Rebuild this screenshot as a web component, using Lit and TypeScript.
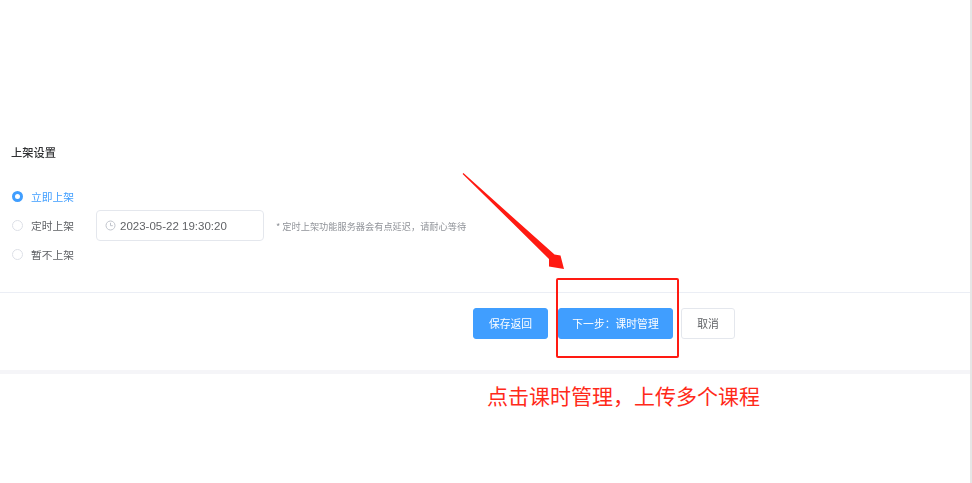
import { LitElement, html, css } from 'lit';
import { customElement } from 'lit/decorators.js';

@customElement('app-root')
export class AppRoot extends LitElement {
  static styles = css`
    :host {
      display: block;
      height: 483px;
      font-family: 'Noto Sans CJK SC', 'Inter', sans-serif;
      color: #606266;
      background: #fff;
    }
    .page {
      position: relative;
      height: 483px;
      overflow: hidden;
      box-sizing: border-box;
      border-right: 2px solid #e6e6e6;
    }
    /* the reference is a slightly resampled capture; annotations on top stay sharp */
    .form, .footer { filter: blur(0.35px); }
    .form {
      height: 292px;
      box-sizing: border-box;
      padding: 145px 0 0 11px;
    }
    .title {
      font-size: 11.25px;
      line-height: 15px;
      font-weight: 500;
      color: #303133;
    }
    .options {
      display: grid;
      grid-template-columns: 85px auto auto 1fr;
      grid-auto-rows: 29px;
      align-items: center;
      margin-top: 22px;
    }
    .radio {
      display: flex;
      align-items: center;
      gap: 8px;
      font-size: 10.75px;
      grid-column: 1;
      padding-left: 1px;
    }
    .radio.on { color: #409eff; }
    .dot {
      width: 11px;
      height: 11px;
      box-sizing: border-box;
      border: 1px solid #dcdfe6;
      border-radius: 50%;
    }
    .on .dot {
      border: 3.5px solid #409eff;
      background: #fff;
    }
    .date {
      display: flex;
      align-items: center;
      gap: 4px;
      width: 168px;
      height: 31px;
      box-sizing: border-box;
      padding-left: 8px;
      border: 1px solid #e4e7ed;
      border-radius: 4px;
      font-family: 'Liberation Sans', sans-serif;
      font-size: 11.5px;
      color: #606266;
    }
    .date svg { flex: none; }
    .hint {
      margin-left: 12px;
      font-size: 9.2px;
      color: #909399;
      white-space: nowrap;
    }
    .footer {
      display: flex;
      justify-content: flex-end;
      align-items: flex-start;
      height: 82px;
      box-sizing: border-box;
      padding: 15px 235px 0 0;
      border-top: 1px solid #ebeef5;
      border-bottom: 4px solid #f5f5f8;
    }
    .btn {
      height: 31px;
      box-sizing: border-box;
      border: 1px solid #e4e7ed;
      border-radius: 3px;
      background: #fff;
      color: #606266;
      font: inherit;
      font-size: 10.8px;
      padding: 0 0 2px;
    }
    .btn.primary {
      background: #409eff;
      border-color: #409eff;
      color: #fff;
    }
    .save { width: 75px; margin-right: 10px; }
    .next { width: 115px; margin-right: 8px; }
    .cancel { width: 54px; }
    .frame {
      position: absolute;
      left: 556px;
      top: 278px;
      width: 123px;
      height: 80px;
      box-sizing: border-box;
      border: 2px solid #ff1a12;
      border-radius: 2px;
    }
    .arrow {
      position: absolute;
      left: 455px;
      top: 165px;
    }
    .note {
      position: absolute;
      left: 487px;
      top: 381px;
      font-size: 21px;
      line-height: 29px;
      color: #ff2a1a;
      white-space: nowrap;
    }
  `;

  render() {
    return html`
      <div class="page">
        <section class="form">
          <div class="title">上架设置</div>
          <div class="options">
            <label class="radio on"><span class="dot"></span>立即上架</label>
            <span></span><span></span><span></span>
            <label class="radio"><span class="dot"></span>定时上架</label>
            <div class="date">
              <svg width="11" height="11" viewBox="0 0 11 11" fill="none" stroke="#c0c4cc" stroke-width="1">
                <circle cx="5.5" cy="5.5" r="4.5"></circle>
                <path d="M5.5 2.8V5.7H7.8"></path>
              </svg>
              2023-05-22 19:30:20
            </div>
            <div class="hint">* 定时上架功能服务器会有点延迟，请耐心等待</div>
            <span></span>
            <label class="radio"><span class="dot"></span>暂不上架</label>
          </div>
        </section>
        <footer class="footer">
          <button class="btn primary save">保存返回</button>
          <button class="btn primary next">下一步：课时管理</button>
          <button class="btn cancel">取消</button>
        </footer>
        <svg class="arrow" width="120" height="110" viewBox="0 0 120 110">
          <path d="M7.6 8.9 L8.4 8.1 L99.5 89.5 L105.5 90.5 L109 104 L94 101.5 L94 94 Z" fill="#ff1a12"></path>
        </svg>
        <div class="frame"></div>
        <div class="note">点击课时管理，上传多个课程</div>
      </div>
    `;
  }
}
